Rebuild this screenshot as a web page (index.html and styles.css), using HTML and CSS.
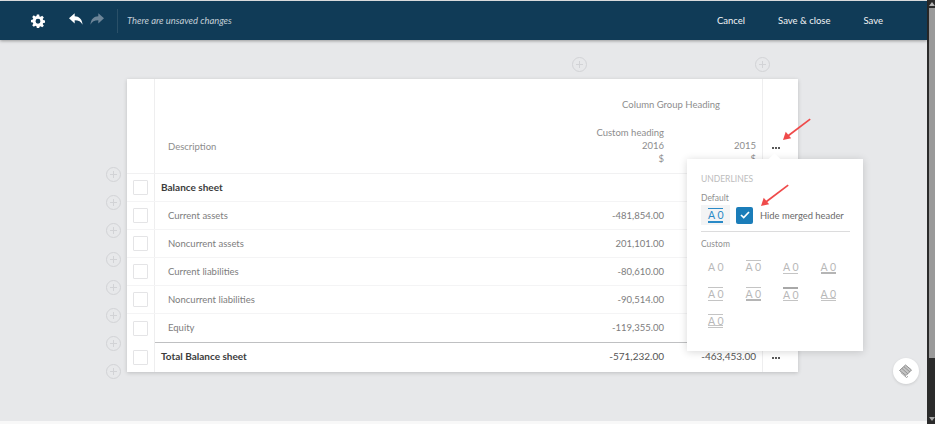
FILE: index.html
```html
<!DOCTYPE html>
<html lang="en">
<head>
<meta charset="utf-8">
<title>Statement editor</title>
<link rel="stylesheet" href="styles.css">
</head>
<body>
<div class="app">
  <div class="main">
    <header class="topbar">
      <svg class="ic-gear" viewBox="0 0 24 24"><path fill="#fff" fill-rule="evenodd" d="M10 1h4l.6 3.1 1.900.8L19.200 3 22 5.800l-1.900 2.700.8 1.900L24 11v3.800l-3.100.6-.8 1.900 1.900 2.700-2.800 2.800-2.700-1.900-1.900.8L14 24h-4l-.6-3.100-1.900-.8L4.800 22 2 19.200l1.900-2.700-.8-1.900L0 14v-3.800l3.100-.6.8-1.900L2 5l2.800-2.800 2.700 1.900 1.900-.8zM12 8.200a4.200 4.200 0 1 0 0 8.400 4.200 4.200 0 0 0 0-8.400z"/></svg>
      <svg class="ic-undo" viewBox="0 0 16 13"><path fill="#fff" d="M6.500 0v3.300C11.500 3.500 15 6.500 15.500 13 13.800 9.500 11 8 6.500 8v3.500L0 5.700z"/></svg>
      <svg class="ic-redo" viewBox="0 0 16 13"><path fill="#6d8598" d="M9.500 0v3.300C4.500 3.500 1 6.500.5 13 2.200 9.500 5 8 9.500 8v3.500L16 5.700z"/></svg>
      <span class="sep"></span>
      <span class="status">There are unsaved changes</span>
      <nav class="actions">
        <span class="act-cancel">Cancel</span>
        <span class="act-close">Save &amp; close</span>
        <span class="act-save">Save</span>
      </nav>
    </header>

    <div class="stage">
      <div class="top-plus">
        <span class="plus plus-a"></span>
        <span class="plus plus-b"></span>
      </div>
      <div class="work">
        <div class="gutter">
          <span class="plus"></span><span class="plus"></span><span class="plus"></span><span class="plus"></span>
          <span class="plus"></span><span class="plus"></span><span class="plus"></span><span class="plus"></span>
        </div>
        <div class="sheet">
          <div class="head">
            <div class="cell-box"></div>
            <div class="head-desc">Description</div>
            <div class="head-main">
              <div class="group">Column Group Heading</div>
              <div class="cols">
                <div class="col-a">Custom heading<br>2016<br>$</div>
                <div class="col-b">2015<br>$</div>
              </div>
            </div>
            <div class="cell-more head-more"><span class="dots"><i></i><i></i><i></i></span></div>
          </div>

          <div class="row row-bold"><div class="cell-box"><span class="box"></span></div><div class="name">Balance sheet</div><div class="num"></div><div class="num"></div><div class="cell-more"></div></div>
          <div class="row"><div class="cell-box"><span class="box"></span></div><div class="name">Current assets</div><div class="num">-481,854.00</div><div class="num"></div><div class="cell-more"></div></div>
          <div class="row"><div class="cell-box"><span class="box"></span></div><div class="name">Noncurrent assets</div><div class="num">201,101.00</div><div class="num"></div><div class="cell-more"></div></div>
          <div class="row"><div class="cell-box"><span class="box"></span></div><div class="name">Current liabilities</div><div class="num">-80,610.00</div><div class="num"></div><div class="cell-more"></div></div>
          <div class="row"><div class="cell-box"><span class="box"></span></div><div class="name">Noncurrent liabilities</div><div class="num">-90,514.00</div><div class="num"></div><div class="cell-more"></div></div>
          <div class="row row-last"><div class="cell-box"><span class="box"></span></div><div class="name">Equity</div><div class="num">-119,355.00</div><div class="num"></div><div class="cell-more"></div></div>
          <div class="row row-bold row-total"><div class="cell-box"><span class="box"></span></div><div class="name">Total Balance sheet</div><div class="num">-571,232.00</div><div class="num">-463,453.00</div><div class="cell-more"><span class="dots"><i></i><i></i><i></i></span></div></div>

          <svg class="arrow arrow-1" viewBox="0 0 32 26"><path fill="none" stroke="#ef4a4a" stroke-width="2" d="M30 1 5 20"/><path fill="#ef4a4a" d="M0 24l3-9 6 7z"/></svg>

          <aside class="pop">
            <span class="notch"></span>
            <div class="pop-title">UNDERLINES</div>
            <div class="pop-label">Default</div>
            <div class="default-row">
              <span class="sample-sel"><span class="a0 a0-blue">A 0</span></span>
              <span class="check"><svg viewBox="0 0 10 8"><path fill="none" stroke="#fff" stroke-width="1.700" d="M1 4l2.700 2.600L9 1"/></svg></span>
              <span class="hide-label">Hide merged header</span>
            </div>
            <div class="pop-rule"></div>
            <div class="pop-label pop-custom">Custom</div>
            <div class="grid">
              <span class="a0">A 0</span>
              <span class="a0 o1">A 0</span>
              <span class="a0 u1">A 0</span>
              <span class="a0 u2">A 0</span>
              <span class="a0 o1 u1">A 0</span>
              <span class="a0 o1 u2">A 0</span>
              <span class="a0 o2 u1">A 0</span>
              <span class="a0 ud">A 0</span>
              <span class="a0 o1 ud">A 0</span>
            </div>
            <svg class="arrow arrow-2" viewBox="0 0 32 26"><path fill="none" stroke="#ef4a4a" stroke-width="2" d="M30 1 5 20"/><path fill="#ef4a4a" d="M0 24l3-9 6 7z"/></svg>
          </aside>
        </div>
      </div>
      <button class="fab" type="button" aria-label="Notes">
        <svg viewBox="0 0 16 16"><path d="M1.500 7.500 7.500 2 13.500 7 8 12.500z" fill="#c4c4c4" stroke="#8f8f8f" stroke-width="1"/><path fill="none" stroke="#8f8f8f" stroke-width=".9" d="M4 5.500 10 11M6 3.800 12 9M2.800 9.500 8.500 14.500l1.500-1.200"/></svg>
      </button>
    </div>
    <div class="bottom-edge"></div>
  </div>
  <div class="scrollbar">
    <span class="sb-up"></span>
    <span class="sb-thumb"></span>
    <span class="sb-down"></span>
  </div>
</div>
</body>
</html>
```
FILE: styles.css
```css
* { box-sizing: border-box; }
html, body { margin: 0; height: 100%; overflow: hidden; }
body { font-family: Lato, "Liberation Sans", sans-serif; font-size: 9.500px; color: #8d8d8d; background: #e7e8ea; }

.app { display: flex; height: 424px; width: 935px; }
.main { flex: 0 0 927px; display: flex; flex-direction: column; position: relative; }

.topbar { flex: 0 0 39px; margin-top: 1px; background: #103b57; display: flex; align-items: center; color: #fff; box-shadow: 0 1px 3px rgba(0,0,0,.35); position: relative; z-index: 2; }
.ic-gear { width: 14px; height: 14px; margin-left: 31px; }
.ic-undo { width: 14px; height: 12px; margin-left: 24px; margin-top: -3px; }
.ic-redo { width: 14px; height: 12px; margin-left: 7px; margin-top: -3px; }
.sep { width: 1px; height: 24px; background: #2a5068; margin-left: 13px; }
.status { font-style: italic; font-size: 9.400px; color: #c3ced6; margin-left: 9px; }
.actions { margin-left: auto; display: flex; font-size: 9.500px; color: #f2f4f6; }
.act-cancel { margin-right: 33px; }
.act-close { margin-right: 33px; }
.act-save { margin-right: 44px; }

.stage { flex: 1; position: relative; }
.top-plus { display: flex; height: 39px; padding: 17px 0 0 572px; }
.plus-b { margin-left: 168px; }

.plus { display: block; width: 15px; height: 15px; border: 1px solid #d2d3d6; border-radius: 50%; position: relative; flex: none; }
.plus::before, .plus::after { content: ""; position: absolute; background: #d2d3d6; }
.plus::before { left: 3px; right: 3px; top: 6px; height: 1px; }
.plus::after { top: 3px; bottom: 3px; left: 6px; width: 1px; }

.work { display: flex; padding-left: 106px; }
.gutter { width: 21px; padding-top: 88px; display: flex; flex-direction: column; gap: 13.200px; }

.sheet { width: 671px; height: 293px; background: #fff; box-shadow: 0 1px 4px rgba(0,0,0,.18); position: relative; }

.head { display: flex; height: 95px; border-bottom: 1px solid #f1f1f2; }
.cell-box { width: 28px; flex: none; border-right: 1px solid #eeeeef; display: flex; align-items: center; justify-content: center; }
.head-desc { width: 181px; flex: none; padding: 62px 0 0 13px; }
.head-main { flex: 1; padding-top: 19px; line-height: 14px; text-align: right; }
.group { padding-right: 42px; }
.cols { display: flex; margin-top: 14px; line-height: 13px; justify-content: flex-end; }
.col-a { width: 120px; }
.col-b { width: 98px; flex: none; padding-right: 6px; padding-top: 13px; height: 26px; }
.cell-more { width: 36px; flex: none; border-left: 1px solid #eeeeef; display: flex; align-items: center; padding-left: 9px; }
.head-more { padding-top: 43px; }

.dots { display: flex; gap: 1px; }
.dots i { width: 2px; height: 2px; border-radius: 50%; background: #222; }

.row { display: flex; height: 28px; border-bottom: 1px solid #f4f4f5; align-items: stretch; color: #7d7d7d; }
.row .name { width: 181px; padding-left: 13px; line-height: 27px; flex: none; }
.row .num { width: 328px; flex: none; text-align: right; line-height: 27px; }
.row .num + .num { width: 98px; padding-right: 6px; }
.row-bold .name { padding-left: 6px; font-weight: 700; font-size: 10px; color: #3c3c3c; }
.row-total .num { font-size: 10px; color: #555; }
.row-last { height: 29px; border-bottom: 0; }
.row-last .name, .row-last .num, .row-last .cell-more { border-bottom: 1px solid #bfc0c2; }
.row-last .cell-more { border-bottom-color: #f4f4f5; }
.row-total { border-bottom: 0; height: 29px; }

.box { width: 15px; height: 15px; border: 1px solid #e4e4e6; border-radius: 1px; display: block; }

.arrow { position: absolute; width: 29px; height: 24px; }
.arrow-1 { left: 656px; top: 39px; }
.arrow-2 { left: 74px; top: 25px; }

.pop { position: absolute; left: 560px; top: 80px; width: 176px; height: 192px; background: #fff; box-shadow: 0 1px 8px rgba(0,0,0,.16); padding: 15px 14px 0; z-index: 3; }
.notch { position: absolute; left: 83px; top: -4px; width: 9px; height: 9px; background: #fff; transform: rotate(45deg); }
.pop-title { color: #bdbdbd; font-size: 8.500px; line-height: 10px; }
.pop-label { color: #8f8f8f; font-size: 8.500px; line-height: 10px; margin-top: 9px; }
.default-row { display: flex; align-items: center; margin-top: 2px; height: 20px; }
.sample-sel { width: 29px; height: 20px; background: #f3f4f5; display: flex; align-items: center; justify-content: center; }
.check { width: 17px; height: 17px; border-radius: 2px; background: #1b7db9; margin-left: 6px; display: flex; align-items: center; justify-content: center; }
.check svg { width: 10px; height: 8px; }
.hide-label { color: #6a6a6a; font-size: 9.400px; margin-left: 7px; white-space: nowrap; }
.pop-rule { height: 1px; background: #dcdcdd; width: 149px; margin-top: 6px; }
.pop-custom { margin-top: 7px; }

.grid { display: grid; grid-template-columns: repeat(4, 15px); gap: 13px 22.500px; margin: 11px 0 0 7px; }
.a0 { display: block; width: 15px; height: 14px; line-height: 12px; font-size: 10.500px; text-align: center; color: #b8b8b8; white-space: nowrap; border-top: 1px solid transparent; border-bottom: 1px solid transparent; }
.a0-blue { color: #2a8ac7; border-top: 1px solid #2a8ac7; border-bottom: 2px solid #2a8ac7; height: 15px; }
.o1 { border-top: 1px solid #c4c4c4; }
.o2 { border-top: 2px solid #a8a8a8; }
.u1 { border-bottom: 1px solid #c4c4c4; }
.u2 { border-bottom: 2px solid #b5b5b5; }
.ud { border-bottom: 3px double #c4c4c4; }

.fab { position: absolute; left: 893px; top: 318px; width: 26px; height: 26px; border: 0; padding: 5px; border-radius: 50%; background: #fff; box-shadow: 0 1px 3px rgba(0,0,0,.12); }
.fab svg { display: block; width: 16px; height: 16px; }

.bottom-edge { flex: 0 0 3px; background: #f8f8f8; }

.scrollbar { flex: 0 0 8px; background: #2b2b2b; display: flex; flex-direction: column; align-items: center; padding-left: 1px; }
.sb-up { width: 0; height: 0; border: 3px solid transparent; border-top: 0; border-bottom: 4px solid #b8b8b8; margin-top: 2px; }
.sb-thumb { width: 6px; height: 350px; background: #9a9a9a; margin-top: 2px; }
.sb-down { width: 0; height: 0; border: 3px solid transparent; border-bottom: 0; border-top: 4px solid #a8a8a8; margin-top: auto; margin-bottom: 3px; }
```
